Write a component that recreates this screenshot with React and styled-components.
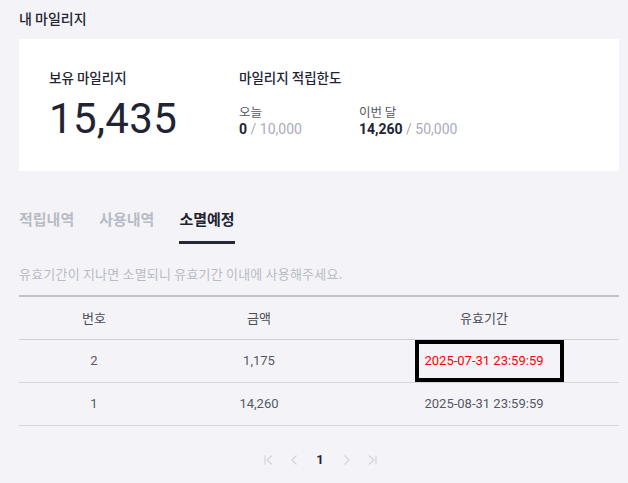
import React from "react";
import styled, { createGlobalStyle } from "styled-components";

const Global = createGlobalStyle`
  html, body { margin: 0; padding: 0; background: #f4f4f8; }
  body { font-family: "Roboto", "Noto Sans CJK KR", sans-serif; color: #222433; }
  * { box-sizing: border-box; }
`;

const Page = styled.div`
  width: 600px;
  margin-left: 19px;
  padding-top: 8px;
`;

const Title = styled.h2`
  margin: 0;
  font-family: "Noto Sans CJK KR", sans-serif;
  font-size: 14px;
  font-weight: 500;
  line-height: 20px;
  color: #222433;
`;

const Card = styled.section`
  margin-top: 11px;
  height: 132px;
  background: #fff;
  padding: 28px 30px 0;
  display: flex;
`;

const HoldBlock = styled.div`
  width: 190px;
  display: flex;
  flex-direction: column;
`;

const Label = styled.div`
  font-family: "Noto Sans CJK KR", sans-serif;
  font-size: 13.5px;
  font-weight: 500;
  line-height: 20px;
  color: #222433;
`;

const BigNumber = styled.div`
  font-family: "Roboto", sans-serif;
  font-size: 42px;
  line-height: 42px;
  margin-top: 11px;
  color: #222433;
  letter-spacing: 0.3px;
`;

const LimitBlock = styled.div`
  display: flex;
  flex-direction: column;
`;

const LimitRow = styled.div`
  display: flex;
  margin-top: 16px;
`;

const LimitItem = styled.div`
  width: 120px;
  display: flex;
  flex-direction: column;
`;

const SubLabel = styled.div`
  font-family: "Noto Sans CJK KR", sans-serif;
  font-size: 12.5px;
  line-height: 17px;
  color: #555866;
`;

const Amount = styled.div`
  font-size: 14px;
  line-height: 18px;
  color: #aaacb6;
  b { color: #222433; font-weight: 700; }
`;

const Tabs = styled.nav`
  display: flex;
  gap: 25px;
  margin-top: 38px;
`;

const Tab = styled.div`
  font-family: "Noto Sans CJK KR", sans-serif;
  font-size: 15px;
  font-weight: 700;
  line-height: 20px;
  padding-bottom: 12px;
  color: ${(p) => (p.$active ? "#222433" : "#b9bbc4")};
  border-bottom: 3px solid ${(p) => (p.$active ? "#252838" : "transparent")};
`;

const Notice = styled.p`
  margin: 21px 0 0;
  font-family: "Noto Sans CJK KR", sans-serif;
  font-size: 13px;
  letter-spacing: 0.2px;
  line-height: 18px;
  color: #b9bbc4;
`;

const Table = styled.table`
  width: 100%;
  margin-top: 12px;
  border-collapse: collapse;
  border-top: 2px solid #c1c2cc;
  table-layout: fixed;
`;

const Th = styled.th`
  height: 43px;
  font-family: "Noto Sans CJK KR", sans-serif;
  font-size: 13px;
  font-weight: 400;
  color: #4a4c57;
  border-bottom: 1px solid #cdced6;
  text-align: center;
  width: ${(p) => p.$w};
`;

const Td = styled.td`
  position: relative;
  height: 43px;
  font-size: 13px;
  color: ${(p) => (p.$red ? "#ff0000" : "#555866")};
  border-bottom: 1px solid #d6d7de;
  text-align: center;
`;

const Marker = styled.span`
  position: absolute;
  top: 0;
  bottom: 0;
  left: calc(50% - 69px);
  width: 149px;
  border: 4px solid #000;
  pointer-events: none;
`;

const Pager = styled.div`
  display: flex;
  justify-content: center;
  align-items: center;
  gap: 12px;
  margin-top: 26px;
  margin-left: 2px;
`;

const PageBtn = styled.span`
  width: 14px;
  height: 16px;
  display: flex;
  align-items: center;
  justify-content: center;
  color: #d3d4db;
  font-size: 13px;
  font-weight: 700;
  &[data-current] { color: #222433; }
`;

const Icon = ({ d }) => (
  <svg width="11" height="12" viewBox="0 0 11 12" fill="none" stroke="currentColor" strokeWidth="1.2">
    <path d={d} />
  </svg>
);

const rows = [
  { no: 2, amount: "1,175", date: "2025-07-31 23:59:59", red: true },
  { no: 1, amount: "14,260", date: "2025-08-31 23:59:59" },
];

export default function App() {
  return (
    <>
      <Global />
      <Page>
        <Title>내 마일리지</Title>
        <Card>
          <HoldBlock>
            <Label>보유 마일리지</Label>
            <BigNumber>15,435</BigNumber>
          </HoldBlock>
          <LimitBlock>
            <Label>마일리지 적립한도</Label>
            <LimitRow>
              <LimitItem>
                <SubLabel>오늘</SubLabel>
                <Amount><b>0</b> / 10,000</Amount>
              </LimitItem>
              <LimitItem>
                <SubLabel>이번 달</SubLabel>
                <Amount><b>14,260</b> / 50,000</Amount>
              </LimitItem>
            </LimitRow>
          </LimitBlock>
        </Card>
        <Tabs>
          <Tab>적립내역</Tab>
          <Tab>사용내역</Tab>
          <Tab $active>소멸예정</Tab>
        </Tabs>
        <Notice>유효기간이 지나면 소멸되니 유효기간 이내에 사용해주세요.</Notice>
        <Table>
          <thead>
            <tr>
              <Th $w="25%">번호</Th>
              <Th $w="30%">금액</Th>
              <Th $w="45%">유효기간</Th>
            </tr>
          </thead>
          <tbody>
            {rows.map((r) => (
              <tr key={r.no}>
                <Td>{r.no}</Td>
                <Td>{r.amount}</Td>
                <Td $red={r.red}>
                  {r.date}
                  {r.red && <Marker />}
                </Td>
              </tr>
            ))}
          </tbody>
        </Table>
        <Pager>
          <PageBtn><Icon d="M2 1.5v9M9 1.5L4 6l5 4.5" /></PageBtn>
          <PageBtn><Icon d="M7.5 1.5L3 6l4.5 4.5" /></PageBtn>
          <PageBtn data-current="">1</PageBtn>
          <PageBtn><Icon d="M3.5 1.5L8 6l-4.5 4.5" /></PageBtn>
          <PageBtn><Icon d="M9 1.5v9M2 1.5L7 6l-5 4.5" /></PageBtn>
        </Pager>
      </Page>
    </>
  );
}
